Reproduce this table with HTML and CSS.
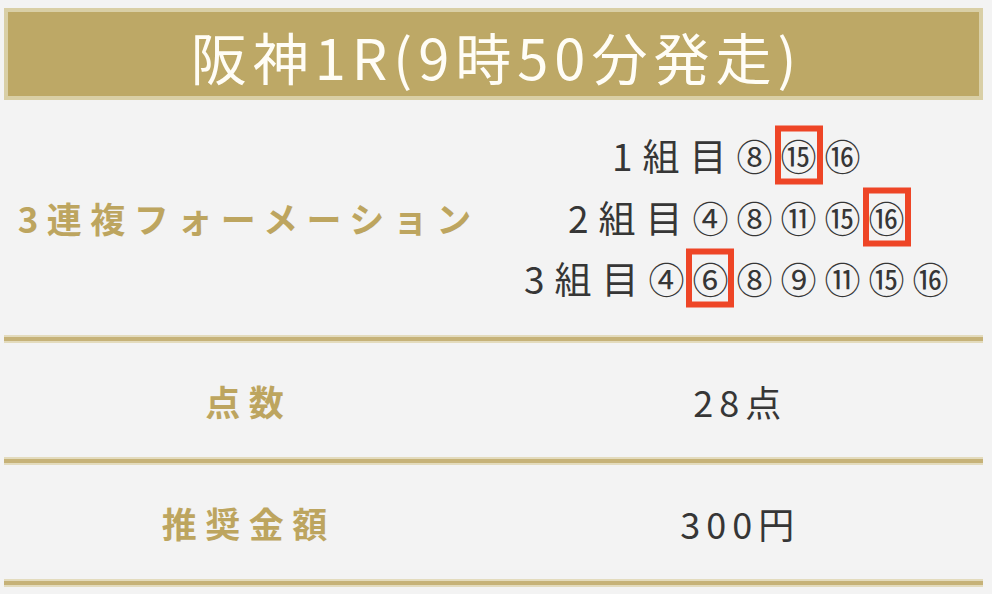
FILE: index.html
```html
<!DOCTYPE html>
<html lang="ja">
<head>
<meta charset="utf-8">
<title>阪神1R</title>
<link rel="stylesheet" href="styles.css">
</head>
<body>
<div class="card">
  <h1 class="title">阪神1R(9時50分発走)</h1>
  <div class="row row-main">
    <div class="label">3連複フォーメーション</div>
    <div class="value">
      <div class="line">1組目<span class="c">⑧</span><span class="c mark">⑮</span><span class="c">⑯</span></div>
      <div class="line">2組目<span class="c">④</span><span class="c">⑧</span><span class="c">⑪</span><span class="c">⑮</span><span class="c mark">⑯</span></div>
      <div class="line">3組目<span class="c">④</span><span class="c mark">⑥</span><span class="c">⑧</span><span class="c">⑨</span><span class="c">⑪</span><span class="c">⑮</span><span class="c">⑯</span></div>
    </div>
  </div>
  <div class="rule"></div>
  <div class="row row-sub">
    <div class="label">点数</div>
    <div class="value"><div class="line narrow">28点</div></div>
  </div>
  <div class="rule"></div>
  <div class="row row-sub">
    <div class="label">推奨金額</div>
    <div class="value"><div class="line narrow">300円</div></div>
  </div>
  <div class="rule"></div>
</div>
</body>
</html>
```

FILE: styles.css
```css
html, body {
  margin: 0;
  padding: 0;
  background: #f3f3f3;
}

body {
  font-family: "Noto Sans CJK JP", "Noto Sans", sans-serif;
  width: 992px;
  height: 594px;
  overflow: hidden;
}

.card {
  margin: 8px 9px 0 4px;
}

.title {
  margin: 0;
  height: 92px;
  box-sizing: border-box;
  background: #bda866;
  border: 4px solid #d9cfa6;
  color: #fffdf6;
  font-weight: 400;
  font-size: 56px;
  letter-spacing: 6px;
  text-indent: 6px;
  line-height: 80px;
  text-align: center;
  padding-top: 4px;
}

.row {
  display: grid;
  grid-template-columns: 1fr 1fr;
  align-items: center;
}

.row-main {
  height: 235px;
}

.row-sub {
  height: 114px;
}

.label {
  text-align: center;
  color: #bda55f;
  font-size: 35px;
  font-weight: 700;
  letter-spacing: 8.5px;
}

.value {
  text-align: center;
  color: #363636;
  font-size: 37px;
  letter-spacing: 10px;
  padding-left: 4px;
}

.line {
  line-height: 61.5px;
}

.c {
  font-size: 36px;
  letter-spacing: 8px;
}

.line.narrow {
  font-size: 36px;
  letter-spacing: 6px;
  padding-top: 4px;
  padding-left: 0;
}

.mark {
  position: relative;
}

.mark::after {
  content: "";
  position: absolute;
  left: calc(50% - 4px);
  top: 50%;
  width: 48px;
  height: 59px;
  transform: translate(-50%, -50%);
  box-sizing: border-box;
  border: 6px solid #ee4526;
}

.rule {
  height: 8px;
  background: linear-gradient(to bottom, #e3dbbd 0, #e3dbbd 2px, #c6b278 2px, #c6b278 6px, #e3dbbd 6px, #e3dbbd 8px);
}
```
